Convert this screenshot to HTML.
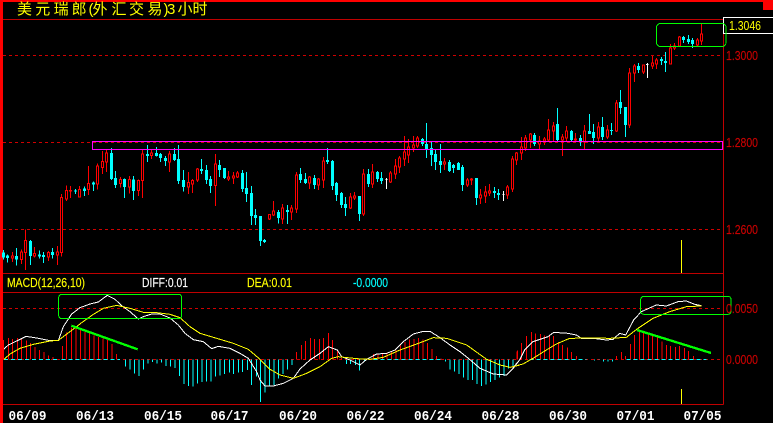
<!DOCTYPE html>
<html><head><meta charset="utf-8"><style>
html,body{margin:0;padding:0;background:#000;width:773px;height:423px;overflow:hidden}
svg{display:block}
text{font-family:"Liberation Sans",sans-serif}
.c{shape-rendering:crispEdges;fill:none}
.lab{fill:#c80000;font-size:13px;stroke:#c80000;stroke-width:.15px}
.m{font-size:12.5px;stroke-width:.15px}
.d text{fill:#fff;font-size:14px;font-weight:bold;font-family:"Liberation Mono",monospace}
</style></head><body>
<svg width="773" height="423" viewBox="0 0 773 423" xmlns="http://www.w3.org/2000/svg">
<rect width="773" height="423" fill="#000"/>
<g class="c">
<rect x="0" y="0" width="773" height="2" fill="#f00"/>
<rect x="0" y="0" width="3" height="423" fill="#f00"/>
<rect x="763" y="0" width="10" height="10" fill="#f00"/>
<path d="M3 19.5H723.5M3 273.5H723.5M3 292.5H723.5M3 404.5H723.5M723.5 19V404.5" stroke="#c00000"/>
<path d="M3 55.5H723M3 142.5H723M3 229.5H723M3 308.5H723M3 359.5H723" stroke="#d00000" stroke-dasharray="3 3"/>
<path d="M681.5 240V273" stroke="#ff0"/>
<path d="M681.5 389V404" stroke="#ff0"/>
<path d="M723 17.5H773M723 33.5H773M723.5 17V33" stroke="#fff"/>
</g>

<!-- candles 0-260 -->
<g class="c" transform="translate(0,130) scale(.33333)">
<path stroke="#0ff" stroke-width="3" d="M11 360V388M22 374V398M49 354V406M91 330V405M118 361V386M130 366V399M157 354V386M226 177V192M253 169V198M280 155V183M334 54V150M346 123V174M373 145V204M400 138V210M442 45V96M469 51V80M481 69V96M496 78V108M523 54V93M535 45V162M550 120V184M604 87V132M619 105V162M631 138V189M658 90V141M673 114V147M727 120V186M739 126V216M754 168V285M766 237V285"/>
<path stroke="#0ff" stroke-width="9" d="M11 368V382M22 377V384M49 378V388M91 333V378M118 373V379M130 375V381M157 366V375M226 182V185M253 175V183M280 158V164M334 69V147M346 144V165M373 147V171M400 148V183M442 72V78M469 69V78M481 72V84M496 84V93M523 72V90M535 87V153M550 150V171M604 117V123M619 120V150M631 147V168M658 105V120M673 114V144M727 129V177M739 174V192M754 189V258M766 255V264"/>
<path stroke="#f00" stroke-width="3" d="M37 366V396M64 358V402M76 298V420M103 351V382M145 363V393M172 348V405M184 192V380M199 166V213M211 168V204M238 168V202M265 108V195M292 100V178M307 63V132M319 58V126M361 141V172M388 138V190M415 148V198M427 60V204M454 57V87M508 63V126M565 126V192M577 147V189M592 114V156M646 72V228M685 123V153M700 126V162M712 123V144"/>
<path stroke="#f00" stroke-width="3" fill="#000" d="M34 378h6v6h-6zM61 366h6v23h-6zM73 331h6v37h-6zM100 370h6v8h-6zM142 367h6v14h-6zM169 366h6v9h-6zM181 202h6v166h-6zM196 181h6v26h-6zM208 181h6v2h-6zM235 178h6v23h-6zM262 160h6v19h-6zM289 108h6v54h-6zM304 94h6v19h-6zM316 69h6v27h-6zM358 148h6v13h-6zM385 148h6v23h-6zM412 151h6v31h-6zM424 72h6v80h-6zM451 69h6v8h-6zM505 72h6v24h-6zM562 157h6v14h-6zM574 151h6v11h-6zM589 117h6v33h-6zM643 102h6v64h-6zM682 141h6v6h-6zM697 138h6v6h-6zM709 129h6v12h-6z"/>
</g>

<!-- candles 260-520 -->
<g class="c" transform="translate(260,100) scale(.33333)">
<path stroke="#0ff" stroke-width="3" d="M1 348V438M13 417V429M55 330V370M82 315V372M121 204V249M136 219V252M163 225V267M202 144V192M217 180V270M229 246V303M244 276V324M256 291V348M298 288V363M325 207V261M352 213V246M364 216V252M487 114V138M499 69V174M514 126V198M526 150V210M541 132V219M568 180V216M580 192V219M595 186V210M607 195V273M649 234V315M703 261V294M715 267V300"/>
<path stroke="#0ff" stroke-width="9" d="M1 348V423M13 420V426M55 336V354M82 330V336M121 222V240M136 237V249M163 234V255M202 180V186M217 183V258M229 249V285M244 279V315M256 312V324M298 288V342M325 222V252M352 216V237M364 234V243M487 117V132M499 132V147M514 144V165M526 162V186M541 183V195M568 186V213M580 195V204M595 189V210M607 201V255M649 234V294M703 273V279M715 279V285"/>
<path stroke="#f00" stroke-width="3" d="M28 342V360M40 303V348M67 312V372M94 315V360M109 216V339M148 228V267M175 234V270M190 171V264M271 279V327M283 276V300M310 207V348M337 192V264M391 213V249M406 177V237M418 168V219M433 108V198M445 117V189M460 108V156M472 108V144M553 174V210M622 234V261M634 234V255M661 267V312M676 258V309M688 252V288M742 255V297M757 168V276M769 156V195"/>
<path stroke="#f00" stroke-width="3" fill="#000" d="M25 344h6v13h-6zM37 333h6v12h-6zM64 324h6v33h-6zM91 324h6v12h-6zM106 225h6v102h-6zM145 231h6v18h-6zM172 237h6v18h-6zM187 183h6v57h-6zM268 291h6v33h-6zM280 288h6v6h-6zM307 222h6v120h-6zM334 216h6v36h-6zM388 219h6v27h-6zM403 198h6v24h-6zM415 174h6v27h-6zM430 156h6v21h-6zM442 141h6v24h-6zM457 135h6v9h-6zM469 114h6v24h-6zM550 186h6v6h-6zM619 240h6v15h-6zM631 237h6v3h-6zM658 285h6v9h-6zM673 276h6v12h-6zM685 273h6v6h-6zM739 261h6v24h-6zM754 177h6v90h-6zM766 159h6v21h-6z"/>
<path stroke="#fff" stroke-width="3" d="M379 234V267M376 238H382M730 273V303M727 283H733"/>
</g>

<!-- candles 513-723 -->
<g class="c" transform="translate(513,0) scale(.33333)">
<path stroke="#0ff" stroke-width="3" d="M64 399V438M133 324V423M175 390V423M202 405V438M229 342V402M241 372V432M268 351V420M295 369V405M322 270V342M337 321V411M376 189V219M445 171V195M457 156V216M511 108V129M526 105V132M538 114V144"/>
<path stroke="#0ff" stroke-width="9" d="M64 405V432M133 372V420M175 393V420M202 414V426M229 393V402M241 396V414M268 381V411M295 390V393M322 306V324M337 321V375M376 198V210M445 177V183M457 183V189M511 111V120M526 117V126M538 120V132"/>
<path stroke="#f00" stroke-width="3" d="M25 411V480M37 405V453M52 399V444M79 408V447M94 411V435M106 357V423M121 366V426M148 402V468M160 378V423M187 399V426M214 375V447M256 366V423M283 375V417M310 300V396M349 204V384M364 192V246M391 195V222M418 168V207M430 174V207M472 132V192M484 129V150M499 108V138M553 114V138M565 72V135"/>
<path stroke="#f00" stroke-width="3" fill="#000" d="M22 441h6v18h-6zM34 414h6v30h-6zM49 402h6v18h-6zM76 423h6v9h-6zM91 417h6v6h-6zM103 390h6v30h-6zM118 378h6v15h-6zM145 411h6v9h-6zM157 393h6v21h-6zM184 417h6v3h-6zM211 393h6v33h-6zM253 381h6v33h-6zM280 390h6v21h-6zM307 309h6v84h-6zM346 219h6v156h-6zM361 198h6v21h-6zM388 195h6v21h-6zM415 189h6v9h-6zM427 180h6v12h-6zM469 144h6v48h-6zM481 138h6v6h-6zM496 111h6v27h-6zM550 120h6v15h-6zM562 102h6v21h-6z"/>
<path stroke="#fff" stroke-width="3" d="M403 189V234M399 193H407"/>
</g>

<!-- magenta zone -->
<g class="c"><rect x="92.5" y="141.5" width="630" height="8" stroke="#f0f"/></g>

<!-- MACD bars / lines -->
<g class="c" transform="translate(0,270) scale(.33333)">
<path stroke="#f00" stroke-width="3" d="M11 268V210M25 268V204M38 268V207M52 268V204M65 268V205M79 268V212M92 268V219M105 268V231M119 268V240M132 268V246M146 268V256M159 268V261M187 268V228M200 268V187M214 268V172M228 268V172M241 268V180M255 268V186M268 268V190M282 268V196M295 268V201M309 268V205M322 268V210M336 268V222M349 268V252"/>
<path stroke="#0ff" stroke-width="3" d="M363 268V269M376 268V290M390 268V298M403 268V310M417 268V318M430 268V298M444 268V280M457 268V276M471 268V280M484 268V278M498 268V288M511 268V290M525 268V294M538 268V318M552 268V342M566 268V348M579 268V350M593 268V340M606 268V336M620 268V335M633 268V334M647 268V320M660 268V316M674 268V312M688 268V308M701 268V312M715 268V308M728 268V306M742 268V300M755 268V345M769 268V320"/>
<path stroke="#0ff" stroke-width="3" stroke-dasharray="12 9" d="M12 268H175M185 268H360"/>
<path stroke="#fff" stroke-width="3" d="M12 237L25 225L50 213L78 199L110 204L150 212L175 212L190 170L215 132L240 113L270 102L295 96L322 76L345 88L365 107L390 125L415 147L430 140L455 132L480 132L510 144L535 165L555 190L580 209L610 215L635 236L655 229L690 235L720 250L745 265L770 305L780 330"/>
<path stroke="#ff0" stroke-width="3" d="M12 268L30 252L60 235L100 223L150 213L175 211L210 185L245 158L280 133L310 115L350 106L390 115L430 127L470 128L510 133L540 143L570 170L600 190L650 205L700 220L745 238L780 268"/>
<rect x="176" y="73" width="369" height="73" rx="9" stroke="#0f0" stroke-width="3"/>
<path stroke="#0f0" stroke-width="7" d="M214 167L413 238"/>
</g>
<g class="c" transform="translate(260,270) scale(.33333)">
<path stroke="#0ff" stroke-width="3" d="M2 268V396M15 268V368M29 268V350M42 268V345M56 268V325M69 268V312M83 268V298M96 268V285M259 268V282M272 268V282M286 268V285M299 268V302M313 268V274M556 268V274M570 268V298M583 268V304M597 268V312M610 268V322M624 268V330M637 268V330M651 268V342M664 268V348M678 268V344M691 268V336M705 268V330M718 268V322M732 268V318M745 268V296M759 268V290"/>
<path stroke="#f00" stroke-width="3" d="M110 268V246M124 268V225M137 268V213M151 268V204M164 268V207M178 268V207M191 268V204M205 268V189M218 268V210M232 268V240M245 268V264M340 268V252M354 268V250M367 268V249M381 268V248M394 268V246M408 268V240M421 268V226M435 268V216M448 268V208M462 268V207M475 268V204M489 268V208M502 268V219M516 268V237M529 268V258M543 268V266M773 268V242"/>
<path stroke="#0ff" stroke-width="3" stroke-dasharray="12 9" d="M340 268H545"/>
<path stroke="#fff" stroke-width="3" d="M0 330L15 348L40 348L70 340L100 325L120 297L150 270L180 250L205 230L232 240L245 260L270 270L300 285L320 268L350 252L380 250L405 240L430 215L460 192L490 184L510 184L540 203L570 225L600 245L625 265L660 295L700 312L740 315L760 295L780 268"/>
<path stroke="#ff0" stroke-width="3" d="M0 268L30 298L60 315L100 325L140 310L180 290L215 265L235 260L290 266L330 268L370 262L420 240L470 222L520 203L560 205L620 225L680 268L720 285L750 292L780 285"/>
</g>
<g class="c" transform="translate(513,270) scale(.33333)">
<path stroke="#f00" stroke-width="3" d="M12 268V244M26 268V219M40 268V198M55 268V186M68 268V190M82 268V192M95 268V196M109 268V198M122 268V198M136 268V216M149 268V225M163 268V232M176 268V246M190 268V258M311 268V258M325 268V246M338 268V258M352 268V222M365 268V195M379 268V184M392 268V189M406 268V193M419 268V198M433 268V203M447 268V215M460 268V225M473 268V228M487 268V231M500 268V228M514 268V234M527 268V243M541 268V258"/>
<path stroke="#0ff" stroke-width="3" d="M245 268V272M258 268V270M272 268V275M285 268V275M298 268V275"/>
<path stroke="#0ff" stroke-width="3" stroke-dasharray="12 9" d="M50 268H220M340 268H580"/>
<path stroke="#fff" stroke-width="3" d="M0 293L20 270L35 240L60 215L90 205L105 200L122 187L165 190L190 195L205 205L240 205L280 210L300 208L320 190L338 195L362 150L385 125L430 105L460 108L495 95L520 93L545 103L565 107"/>
<path stroke="#ff0" stroke-width="3" d="M0 290L30 282L60 265L100 240L130 222L170 205L240 204L290 205L340 202L375 175L420 145L470 125L520 110L565 108"/>
<rect x="383" y="79" width="271" height="54" rx="9" stroke="#0f0" stroke-width="3"/>
<path stroke="#0f0" stroke-width="7" d="M372 180L594 249"/>
</g>
<g class="c"><rect x="656.5" y="23.5" width="69.5" height="23" rx="4" stroke="#0f0"/></g>

<!-- text -->
<text y="14" x="17 35.3 53.6 71.6 88.5 92.5 111.5 129 147.5 163.5 167 177.5 192.5" font-size="15" fill="#ff0" style="font-family:'Liberation Sans','Noto Sans CJK SC','WenQuanYi Zen Hei',sans-serif">美元瑞郎(外汇交易)3小时</text>
<text x="729" y="30" font-size="13" fill="#ff0" textLength="32" lengthAdjust="spacingAndGlyphs">1.3046</text>
<text class="lab" x="726" y="60" textLength="32" lengthAdjust="spacingAndGlyphs">1.3000</text>
<text class="lab" x="726" y="147" textLength="32" lengthAdjust="spacingAndGlyphs">1.2800</text>
<text class="lab" x="726" y="234" textLength="32" lengthAdjust="spacingAndGlyphs">1.2600</text>
<text class="lab" x="726" y="313" textLength="32" lengthAdjust="spacingAndGlyphs">0.0050</text>
<text class="lab" x="726" y="364" textLength="32" lengthAdjust="spacingAndGlyphs">0.0000</text>
<text class="m" x="7" y="287" fill="#ff0" stroke="#ff0" textLength="78" lengthAdjust="spacingAndGlyphs">MACD(12,26,10)</text>
<text class="m" x="142" y="287" fill="#fff" stroke="#fff" textLength="46" lengthAdjust="spacingAndGlyphs">DIFF:0.01</text>
<text class="m" x="247" y="287" fill="#ff0" stroke="#ff0" textLength="45" lengthAdjust="spacingAndGlyphs">DEA:0.01</text>
<text class="m" x="353" y="287" fill="#0ff" stroke="#0ff" textLength="35" lengthAdjust="spacingAndGlyphs">-0.0000</text>
<g class="d">
<text x="8.5" y="420" textLength="38" lengthAdjust="spacingAndGlyphs">06/09</text>
<text x="76" y="420" textLength="38" lengthAdjust="spacingAndGlyphs">06/13</text>
<text x="144" y="420" textLength="38" lengthAdjust="spacingAndGlyphs">06/15</text>
<text x="210.5" y="420" textLength="38" lengthAdjust="spacingAndGlyphs">06/17</text>
<text x="279" y="420" textLength="38" lengthAdjust="spacingAndGlyphs">06/20</text>
<text x="346.5" y="420" textLength="38" lengthAdjust="spacingAndGlyphs">06/22</text>
<text x="414" y="420" textLength="38" lengthAdjust="spacingAndGlyphs">06/24</text>
<text x="481.5" y="420" textLength="38" lengthAdjust="spacingAndGlyphs">06/28</text>
<text x="549" y="420" textLength="38" lengthAdjust="spacingAndGlyphs">06/30</text>
<text x="616.5" y="420" textLength="38" lengthAdjust="spacingAndGlyphs">07/01</text>
<text x="683.5" y="420" textLength="38" lengthAdjust="spacingAndGlyphs">07/05</text>
</g>
</svg>
</body></html>
